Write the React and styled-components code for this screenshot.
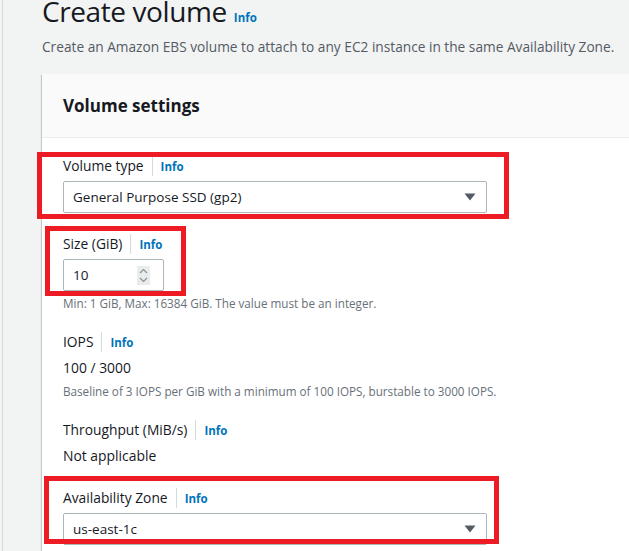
import React from 'react';
import styled, { createGlobalStyle } from 'styled-components';

const GlobalStyle = createGlobalStyle`
  body {
    margin: 0;
    background: #f2f3f3;
    font-family: "Open Sans", "Noto Sans", Arial, sans-serif;
    color: #16191f;
  }
`;

const Page = styled.div`
  height: 551px;
  margin-left: 2px;
  border-left: 1px solid #d5dbdb;
  padding-left: 39px;
  overflow: hidden;
`;

const TitleRow = styled.div`
  display: flex;
  align-items: baseline;
  gap: 7px;
  margin-top: -6px;
`;

const Title = styled.h1`
  margin: 0;
  font-size: 28px;
  line-height: 34px;
  font-weight: 400;
  letter-spacing: -0.4px;
`;

const Description = styled.p`
  margin: 9px 0 0;
  font-size: 13.7px;
  line-height: 20px;
  color: #545b64;
`;

const Card = styled.section`
  width: 620px;
  margin-top: 17px;
  background: #fff;
  box-shadow: 0 1px 1px 0 rgba(0, 28, 36, 0.3), -1px 1px 1px 0 rgba(0, 28, 36, 0.15);
`;

const CardHeader = styled.div`
  height: 63px;
  display: flex;
  align-items: center;
  padding: 0 21px;
  background: #fafafa;
  border-bottom: 1px solid #eaeded;
`;

const CardTitle = styled.h2`
  margin: 0;
  font-size: 17px;
  font-weight: 700;
`;

const CardBody = styled.div`
  display: flex;
  flex-direction: column;
  gap: 20px;
  padding: 17px 21px 20px;
`;

const Field = styled.div`
  position: relative;
  display: flex;
  flex-direction: column;
  gap: 4px;
`;

const LabelRow = styled.div`
  display: flex;
  align-items: center;
  height: 22px;
`;

const Label = styled.span`
  font-size: 13.8px;
  line-height: 22px;
`;

const Divider = styled.span`
  width: 1px;
  height: 20px;
  margin: 0 8px;
  background: #d5dbdb;
`;

const InfoLink = styled.a`
  font-size: 11.5px;
  font-weight: 700;
  color: #0073bb;
  text-decoration: none;
`;

const Select = styled.div`
  box-sizing: border-box;
  width: 424px;
  height: 32px;
  display: flex;
  align-items: center;
  justify-content: space-between;
  padding: 0 10px 0 9px;
  border: 1px solid #aab7b8;
  border-radius: 2px;
  font-size: 13.5px;
`;

const NumberBox = styled(Select)`
  width: 101px;
  padding-right: 13px;
`;

const Stepper = styled.span`
  width: 13px;
  height: 19px;
  display: flex;
  align-items: center;
  justify-content: center;
  background: #e9ebed;
`;

const Value = styled.div`
  font-size: 13.9px;
  line-height: 22px;
`;

const Hint = styled.div`
  font-size: 11.7px;
  line-height: 16px;
  color: #687078;
`;

const Highlight = styled.div`
  position: absolute;
  top: ${p => p.$top}px;
  left: ${p => p.$left}px;
  width: ${p => p.$width}px;
  height: ${p => p.$height}px;
  border: 5px solid #ed1c24;
  box-sizing: border-box;
  pointer-events: none;
`;

const Caret = () => (
  <svg width="12" height="8" viewBox="0 0 12 8">
    <path d="M0.5 0.5h11L6 7.5z" fill="#545b64" />
  </svg>
);

const Spin = () => (
  <svg width="9" height="15" viewBox="0 0 9 15">
    <path d="M1 5l3.5-3.5L8 5M1 10l3.5 3.5L8 10" fill="none" stroke="#879596" strokeWidth="1.2" />
  </svg>
);

const FieldLabel = ({ children }) => (
  <LabelRow>
    <Label>{children}</Label>
    <Divider />
    <InfoLink href="#">Info</InfoLink>
  </LabelRow>
);

export default function App() {
  return (
    <>
      <GlobalStyle />
      <Page>
        <TitleRow>
          <Title>Create volume</Title>
          <InfoLink href="#">Info</InfoLink>
        </TitleRow>
        <Description>
          Create an Amazon EBS volume to attach to any EC2 instance in the same Availability Zone.
        </Description>

        <Card>
          <CardHeader>
            <CardTitle>Volume settings</CardTitle>
          </CardHeader>
          <CardBody>
            <Field>
              <FieldLabel>Volume type</FieldLabel>
              <Select>
                General Purpose SSD (gp2)
                <Caret />
              </Select>
              <Highlight $top={-3} $left={-26} $width={472} $height={67} />
            </Field>

            <Field>
              <FieldLabel>Size (GiB)</FieldLabel>
              <NumberBox>
                10
                <Stepper>
                  <Spin />
                </Stepper>
              </NumberBox>
              <Hint>Min: 1 GiB, Max: 16384 GiB. The value must be an integer.</Hint>
              <Highlight $top={-7} $left={-18} $width={141} $height={70} />
            </Field>

            <Field>
              <FieldLabel>IOPS</FieldLabel>
              <Value>100 / 3000</Value>
              <Hint>Baseline of 3 IOPS per GiB with a minimum of 100 IOPS, burstable to 3000 IOPS.</Hint>
            </Field>

            <Field>
              <FieldLabel>Throughput (MiB/s)</FieldLabel>
              <Value>Not applicable</Value>
            </Field>

            <Field>
              <FieldLabel>Availability Zone</FieldLabel>
              <Select>
                us-east-1c
                <Caret />
              </Select>
              <Highlight $top={-11} $left={-19} $width={455} $height={68} />
            </Field>
          </CardBody>
        </Card>
      </Page>
    </>
  );
}
